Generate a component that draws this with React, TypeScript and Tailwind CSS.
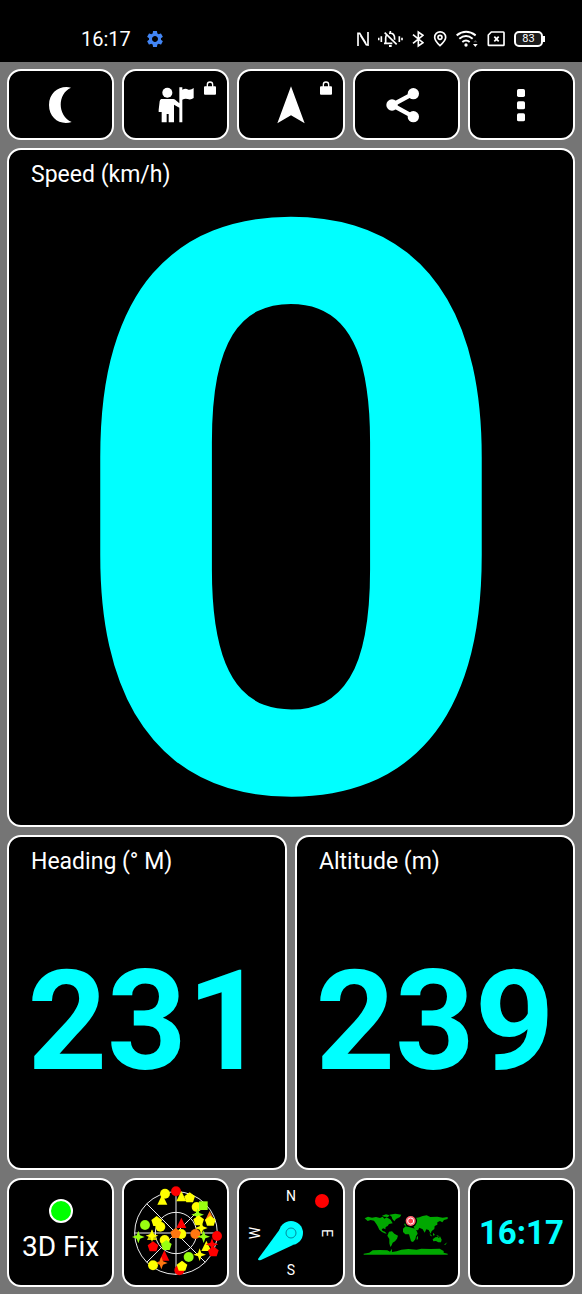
import type { ReactNode } from 'react';
import { MdSettings } from 'react-icons/md';
import { clsx } from 'clsx';

type Marker = { shape: 'circle' | 'triangle' | 'pentagon' | 'star' | 'square'; x: number; y: number; color: string };

const YELLOW = '#ffff00';
const LIME = '#99ff11';
const RED = '#ff0000';
const ORANGE = '#ff7711';

// Satellites in the sky view, drawn in this order
const satellites: Marker[] = [
  { shape: 'circle', x: 119, y: 39, color: YELLOW },
  { shape: 'triangle', x: 111, y: 58, color: YELLOW },
  { shape: 'circle', x: 152, y: 32, color: RED },
  { shape: 'triangle', x: 168, y: 48, color: YELLOW },
  { shape: 'pentagon', x: 193, y: 51, color: YELLOW },
  { shape: 'circle', x: 214, y: 79, color: YELLOW },
  { shape: 'star', x: 217, y: 102, color: LIME },
  { shape: 'square', x: 234, y: 75, color: LIME },
  { shape: 'triangle', x: 253, y: 108, color: ORANGE },
  { shape: 'pentagon', x: 255, y: 121, color: YELLOW },
  { shape: 'star', x: 228, y: 142, color: YELLOW },
  { shape: 'pentagon', x: 220, y: 120, color: YELLOW },
  { shape: 'circle', x: 59, y: 133, color: LIME },
  { shape: 'circle', x: 105, y: 138, color: YELLOW },
  { shape: 'pentagon', x: 94, y: 122, color: YELLOW },
  { shape: 'triangle', x: 168, y: 128, color: RED },
  { shape: 'circle', x: 168, y: 160, color: YELLOW },
  { shape: 'pentagon', x: 151, y: 158, color: ORANGE },
  { shape: 'circle', x: 210, y: 160, color: ORANGE },
  { shape: 'star', x: 235, y: 168, color: LIME },
  { shape: 'circle', x: 275, y: 166, color: RED },
  { shape: 'star', x: 39, y: 169, color: LIME },
  { shape: 'triangle', x: 80, y: 164, color: '#cccc00' },
  { shape: 'star', x: 80, y: 165, color: YELLOW },
  { shape: 'circle', x: 118, y: 178, color: YELLOW },
  { shape: 'pentagon', x: 123, y: 194, color: LIME },
  { shape: 'pentagon', x: 83, y: 198, color: RED },
  { shape: 'triangle', x: 117, y: 226, color: RED },
  { shape: 'star', x: 108, y: 247, color: ORANGE },
  { shape: 'circle', x: 83, y: 254, color: YELLOW },
  { shape: 'triangle', x: 243, y: 197, color: YELLOW },
  { shape: 'star', x: 260, y: 191, color: RED },
  { shape: 'pentagon', x: 264, y: 213, color: RED },
  { shape: 'star', x: 223, y: 222, color: YELLOW },
  { shape: 'circle', x: 190, y: 229, color: LIME },
  { shape: 'circle', x: 162, y: 269, color: RED },
  { shape: 'pentagon', x: 170, y: 256, color: YELLOW },
];

const Satellite = ({ shape, x, y, color }: Marker) => {
  const move = `translate(${x} ${y})`;
  if (shape === 'circle') return <circle cx={x} cy={y} r="15" fill={color} stroke="#000" strokeOpacity="0.3" />;
  if (shape === 'square') return <rect x={x - 13} y={y - 13} width="26" height="26" fill={color} />;
  if (shape === 'triangle') return <path transform={move} d="M0-17 15 14H-15Z" fill={color} />;
  if (shape === 'star') return <path transform={move} d="M0-19 5-5 19 0 5 5 0 19-5 5-19 0-5-5Z" fill={color} />;
  return <path transform={move} d="M0-16 16-4 10 14H-10L-16-4Z" fill={color} />;
};

const StatusIcons = () => (
  <div className="flex items-center gap-[9px] text-white" aria-hidden="true">
    <svg className="h-[22px] w-3" viewBox="198 84 36 66" fill="none" stroke="currentColor" strokeWidth="5">
      <path d="M201 138V100L206 100 224 129M231 96V135L226 134 209 107" />
    </svg>
    <svg className="h-[22px] w-[25px]" viewBox="261 84 75 66" fill="none" stroke="currentColor" strokeWidth="5">
      <path d="M263 113V121M271 109V126M325 109V126M333 113V121" />
      <path d="M279 130H304M284 129V114Q284 107 288 104M294 100Q312 97 311 119M298 93V100M281 98 317 133" />
      <path d="M298 135V141" strokeWidth="8" />
    </svg>
    <svg className="h-[22px] w-3" viewBox="363 84 36 66" fill="none" stroke="currentColor" strokeWidth="5">
      <path d="M366 104 396 128 382 138V96L396 106 366 130" />
    </svg>
    <svg className="h-[22px] w-3.5" viewBox="426 84 42 66" fill="none" stroke="currentColor" strokeWidth="5">
      <path d="M447 137C438 129 431 121 431 112A16 16 0 0 1 464 112C464 121 456 129 447 137Z" />
      <circle cx="447" cy="112" r="6" />
    </svg>
    <svg className="h-[22px] w-[22px]" viewBox="500 84 66 66" fill="none" stroke="currentColor" strokeWidth="6">
      <path d="M502 106Q530 85 559 106M510 116Q530 100 550 116M519 126Q530 117 541 126" />
      <circle cx="530" cy="135" r="5" fill="currentColor" stroke="none" />
      <path d="M551 132H565L558 141Z" fill="currentColor" stroke="none" />
      <path d="M552 127H564L558 120Z" fill="#555" stroke="none" />
    </svg>
    <svg className="h-[22px] w-[18px]" viewBox="587 84 54 66" fill="none" stroke="currentColor" strokeWidth="5">
      <path d="M600 96H636Q638 96 638 98V134Q638 136 636 136H593Q591 136 591 134V105ZM609 110 622 124M622 110 609 124" />
    </svg>
    <div className="flex items-center">
      <span className="flex h-4 w-[29px] items-center justify-center rounded-[5px] border-2 border-white bg-[#1c1c1c] text-[11px] leading-3">
        83
      </span>
      <span className="h-1.5 w-0.5 bg-white" />
    </div>
  </div>
);

const Lock = () => (
  <svg className="absolute top-2.5 right-[11px] h-3.5 w-3" viewBox="0 0 36 42" aria-hidden="true">
    <path d="M10 18V11A8 8 0 0 1 26 11V18" fill="none" stroke="#fff" strokeWidth="4" />
    <rect y="16" width="36" height="25" rx="3" fill="#fff" />
  </svg>
);

const MoonIcon = () => (
  <svg className="size-10" viewBox="123 254 120 120" fill="#fff" aria-hidden="true">
    <path d="M213 262C180 254 147 276 147 314C147 354 181 376 215 365C172 346 171 281 213 262Z" />
  </svg>
);

const WaypointIcon = () => (
  <svg className="size-10" viewBox="468 254 120 120" fill="#fff" aria-hidden="true">
    <circle cx="502" cy="277" r="15" />
    <path d="M484 296H520Q525 296 529 301L538 309V261H547V268Q557 263 565 268 573 270 581 263V293Q572 300 563 296 555 293 547 298V366H538V322L522 313V366H506V341H500V366H485V335H476V328L479 303Q480 297 484 296Z" />
  </svg>
);

const ArrowIcon = () => (
  <svg className="size-10" viewBox="0 0 120 120" fill="#fff" aria-hidden="true">
    <path d="M60 4 101 115 60 91 19 115Z" />
  </svg>
);

const ShareIcon = () => (
  <svg className="size-10" viewBox="285 254 120 120" fill="#fff" aria-hidden="true">
    <path d="M367 280 303 314 367 349" fill="none" stroke="#fff" strokeWidth="13" />
    <circle cx="303" cy="314" r="17" />
    <circle cx="367" cy="280" r="17" />
    <circle cx="367" cy="349" r="17" />
  </svg>
);

const MoreIcon = () => (
  <svg className="size-10" viewBox="630 254 120 120" fill="#fff" aria-hidden="true">
    <rect x="678" y="266" width="24" height="24" rx="5" />
    <rect x="678" y="303" width="24" height="24" rx="5" />
    <rect x="678" y="339" width="24" height="24" rx="5" />
  </svg>
);

const SkyView = () => (
  <svg className="h-[104px] w-[104px] shrink-0" viewBox="-4 1 312 312" aria-hidden="true">
    <g fill="none" stroke="#eee" strokeWidth="3">
      <circle cx="152" cy="157" r="124" />
      <circle cx="152" cy="157" r="62" />
      <path d="M28 157H276M152 33V281M64 69 240 245M64 245 240 69" />
    </g>
    {satellites.map((s, i) => (
      <Satellite key={i} {...s} />
    ))}
  </svg>
);

const Compass = () => (
  <svg className="h-[104px] w-[104px] shrink-0" viewBox="0 0 104 104" aria-hidden="true">
    <g fill="#fff" fontSize="14" textAnchor="middle">
      <text x="52" y="20">N</text>
      <text x="52" y="94">S</text>
      <text transform="translate(21 52) rotate(-90)">W</text>
      <text transform="translate(83 52) rotate(90)">E</text>
    </g>
    <circle cx="83" cy="20" r="7" fill={RED} />
    <path d="M41 48 19 78Q19 80 22 79L54 64Z" fill="#00ffff" />
    <circle cx="52" cy="52" r="12" fill="#00ffff" />
    <circle cx="52" cy="52" r="5" fill="none" stroke="#008b9b" />
  </svg>
);

const WorldMap = () => (
  <svg className="h-[52px] w-[92px] shrink-0" viewBox="0 0 276 156" aria-hidden="true">
    <g fill="#00a800">
      <path d="M14 34 24 29 36 32 48 30 60 33 68 29 73 35 80 31 92 38 98 49 87 51 83 57 77 60 76 67 70 64 65 67 68 72 75 74 80 80 74 79 66 75 58 68 53 58 49 51 42 41 32 39 23 42Z" />
      <path d="M66 26 78 22 89 25 84 30 72 29ZM88 23 106 20 124 23 120 30 108 36 103 43 97 36 95 29Z" />
      <path d="M87 74 96 73 103 80 114 86 111 95 105 103 98 107 95 115 91 120 88 109 88 96 82 86Z" />
      <path d="M129 65 137 58 148 60 157 63 166 65 171 74 173 80 168 88 166 97 159 105 153 103 150 92 147 82 136 82 129 75Z" />
      <path d="M132 52 138 46 145 39 149 31 158 27 164 34 178 31 188 27 200 25 211 30 232 29 248 32 263 30 263 36 252 39 247 46 240 42 232 46 232 53 224 57 223 66 215 72 212 80 206 69 199 67 194 77 188 67 178 62 174 70 166 69 160 58 148 57 140 51 136 58Z" />
      <path d="M170 91 174 86 174 96 170 99ZM208 79 217 88 212 87ZM219 77 225 84 219 86ZM229 84 239 88 233 89Z" />
      <path d="M218 97 226 91 233 90 237 93 240 88 245 98 243 106 235 106 228 102 220 103ZM258 109 262 106 255 115 253 112Z" />
      <path d="M11 140 28 137 38 130 60 129 82 130 90 134 96 125 96 135 110 133 124 128 145 126 170 128 184 125 212 126 239 125 251 132 251 137 263 140 263 143H11Z" />
    </g>
    <circle cx="152" cy="42" r="19" fill="#000" />
    <circle cx="152" cy="42" r="15" fill="#ff6670" />
    <circle cx="152" cy="42" r="9" fill="#ff4050" stroke="#fff" strokeWidth="3" />
  </svg>
);

type TileProps = { label: string; tall?: boolean; children: ReactNode };

const Tile = ({ label, tall, children }: TileProps) => (
  <button
    type="button"
    aria-label={label}
    className={clsx(
      'relative flex min-w-0 flex-col items-center justify-center overflow-hidden rounded-[14px] border-2 border-white bg-black',
      tall ? 'h-[109px]' : 'h-[71px]',
    )}
  >
    {children}
  </button>
);

type ReadoutProps = { title: string; value: string; big?: boolean };

const Readout = ({ title, value, big }: ReadoutProps) => (
  <section
    className={clsx(
      'flex min-w-0 flex-col rounded-[14px] border-2 border-white bg-black',
      big && 'flex-[675_1_0]',
    )}
  >
    <h2 className="pt-[13px] pl-[22px] text-[23px] leading-6">{title}</h2>
    <div
      className={clsx(
        'flex flex-1 items-center justify-center font-bold text-[#00ffff]',
        big ? 'pt-6 text-[794px] leading-[600px]' : 'text-[139px] leading-[141px]',
      )}
    >
      {value}
    </div>
  </section>
);

const App = () => {
  return (
    <main className="flex min-h-screen flex-col bg-[#757575] font-['Roboto',sans-serif] text-white">
      <header className="flex h-[62px] items-center justify-between bg-black pt-4 pr-[37px] pl-[81px]">
        <div className="flex items-center gap-3.5">
          <time className="text-xl leading-6">16:17</time>
          <MdSettings className="size-5 text-[#4285f4]" aria-hidden="true" />
        </div>
        <StatusIcons />
      </header>

      <div className="flex flex-1 flex-col gap-2 p-[7px]">
        <nav className="grid grid-cols-5 gap-2">
          <Tile label="Night mode">
            <MoonIcon />
          </Tile>
          <Tile label="Waypoints">
            <WaypointIcon />
            <Lock />
          </Tile>
          <Tile label="Navigate">
            <ArrowIcon />
            <Lock />
          </Tile>
          <Tile label="Share">
            <ShareIcon />
          </Tile>
          <Tile label="More">
            <MoreIcon />
          </Tile>
        </nav>

        <Readout title="Speed (km/h)" value="0" big />

        <div className="grid flex-[335_1_0] grid-cols-2 gap-2">
          <Readout title="Heading (° M)" value="231" />
          <Readout title="Altitude (m)" value="239" />
        </div>

        <nav className="grid grid-cols-5 gap-2">
          <Tile label="3D Fix" tall>
            <span className="size-6 rounded-full border-2 border-white bg-[#00ff00]" />
            <span className="pt-2 pb-1 text-[28px] leading-8">3D Fix</span>
          </Tile>
          <Tile label="Satellites" tall>
            <SkyView />
          </Tile>
          <Tile label="Compass" tall>
            <Compass />
          </Tile>
          <Tile label="Map" tall>
            <WorldMap />
          </Tile>
          <Tile label="Clock" tall>
            <time className="text-[33px] leading-10 font-bold text-[#00ffff]">16:17</time>
          </Tile>
        </nav>
      </div>
    </main>
  );
};

export default App;
